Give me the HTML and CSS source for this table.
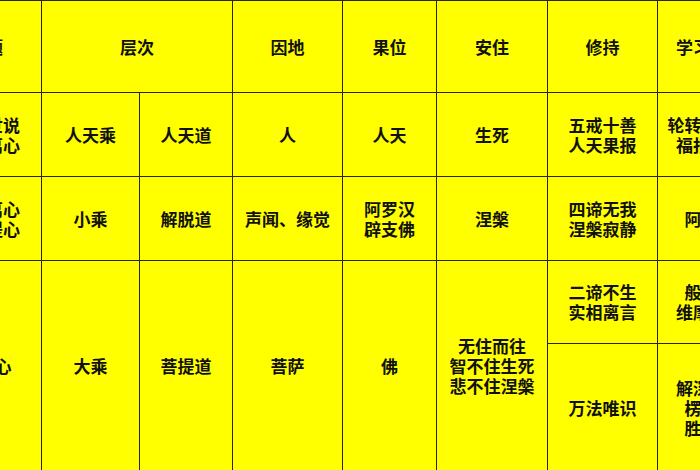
FILE: index.html
```html
<!DOCTYPE html>
<html lang="zh-CN">
<head>
<meta charset="utf-8">
<title>五乘佛法</title>
<link rel="stylesheet" href="styles.css">
</head>
<body>
<div class="frame">
  <div class="grid">
    <div class="cell">主题</div>
    <div class="cell span2">层次</div>
    <div class="cell">因地</div>
    <div class="cell">果位</div>
    <div class="cell">安住</div>
    <div class="cell">修持</div>
    <div class="cell">学习经典</div>

    <div class="cell">方便世说<br>无出离心</div>
    <div class="cell">人天乘</div>
    <div class="cell">人天道</div>
    <div class="cell">人</div>
    <div class="cell">人天</div>
    <div class="cell">生死</div>
    <div class="cell">五戒十善<br>人天果报</div>
    <div class="cell">轮转生死中<br>福报享尽</div>

    <div class="cell">具出离心<br>无菩提心</div>
    <div class="cell">小乘</div>
    <div class="cell">解脱道</div>
    <div class="cell">声闻、缘觉</div>
    <div class="cell">阿罗汉<br>辟支佛</div>
    <div class="cell">涅槃</div>
    <div class="cell">四谛无我<br>涅槃寂静</div>
    <div class="cell">阿含经</div>

    <div class="cell tall">菩提心</div>
    <div class="cell tall">大乘</div>
    <div class="cell tall">菩提道</div>
    <div class="cell tall">菩萨</div>
    <div class="cell tall">佛</div>
    <div class="cell tall">无住而往<br>智不住生死<br>悲不住涅槃</div>
    <div class="cell">二谛不生<br>实相离言</div>
    <div class="cell">般若经<br>维摩诘经</div>
    <div class="cell">万法唯识</div>
    <div class="cell">解深密经<br>楞伽经<br>胜鬘经</div>
  </div>
</div>
</body>
</html>
```

FILE: styles.css
```css
html, body {
  margin: 0;
  padding: 0;
  background: #ffff00;
  overflow: hidden;
}

.frame {
  width: 700px;
  height: 470px;
  overflow: hidden;
}

.grid {
  display: grid;
  grid-template-columns: 110px 97px 92px 109px 93px 110px 109px 104px;
  grid-template-rows: 91px 83px 83px 82px 127px;
  gap: 1px;
  padding: 1px;
  margin-left: -70px;
  width: max-content;
  background: #262617;
  font-family: "Microsoft YaHei", "Noto Sans CJK SC", "Noto Sans", sans-serif;
  font-weight: 700;
  font-size: 17px;
  line-height: 20px;
  color: #111;
}

.cell {
  background: #ffff00;
  display: flex;
  align-items: center;
  justify-content: center;
  text-align: center;
  white-space: nowrap;
}

.span2 {
  grid-column: span 2;
}

.tall {
  grid-row: span 2;
}
```
